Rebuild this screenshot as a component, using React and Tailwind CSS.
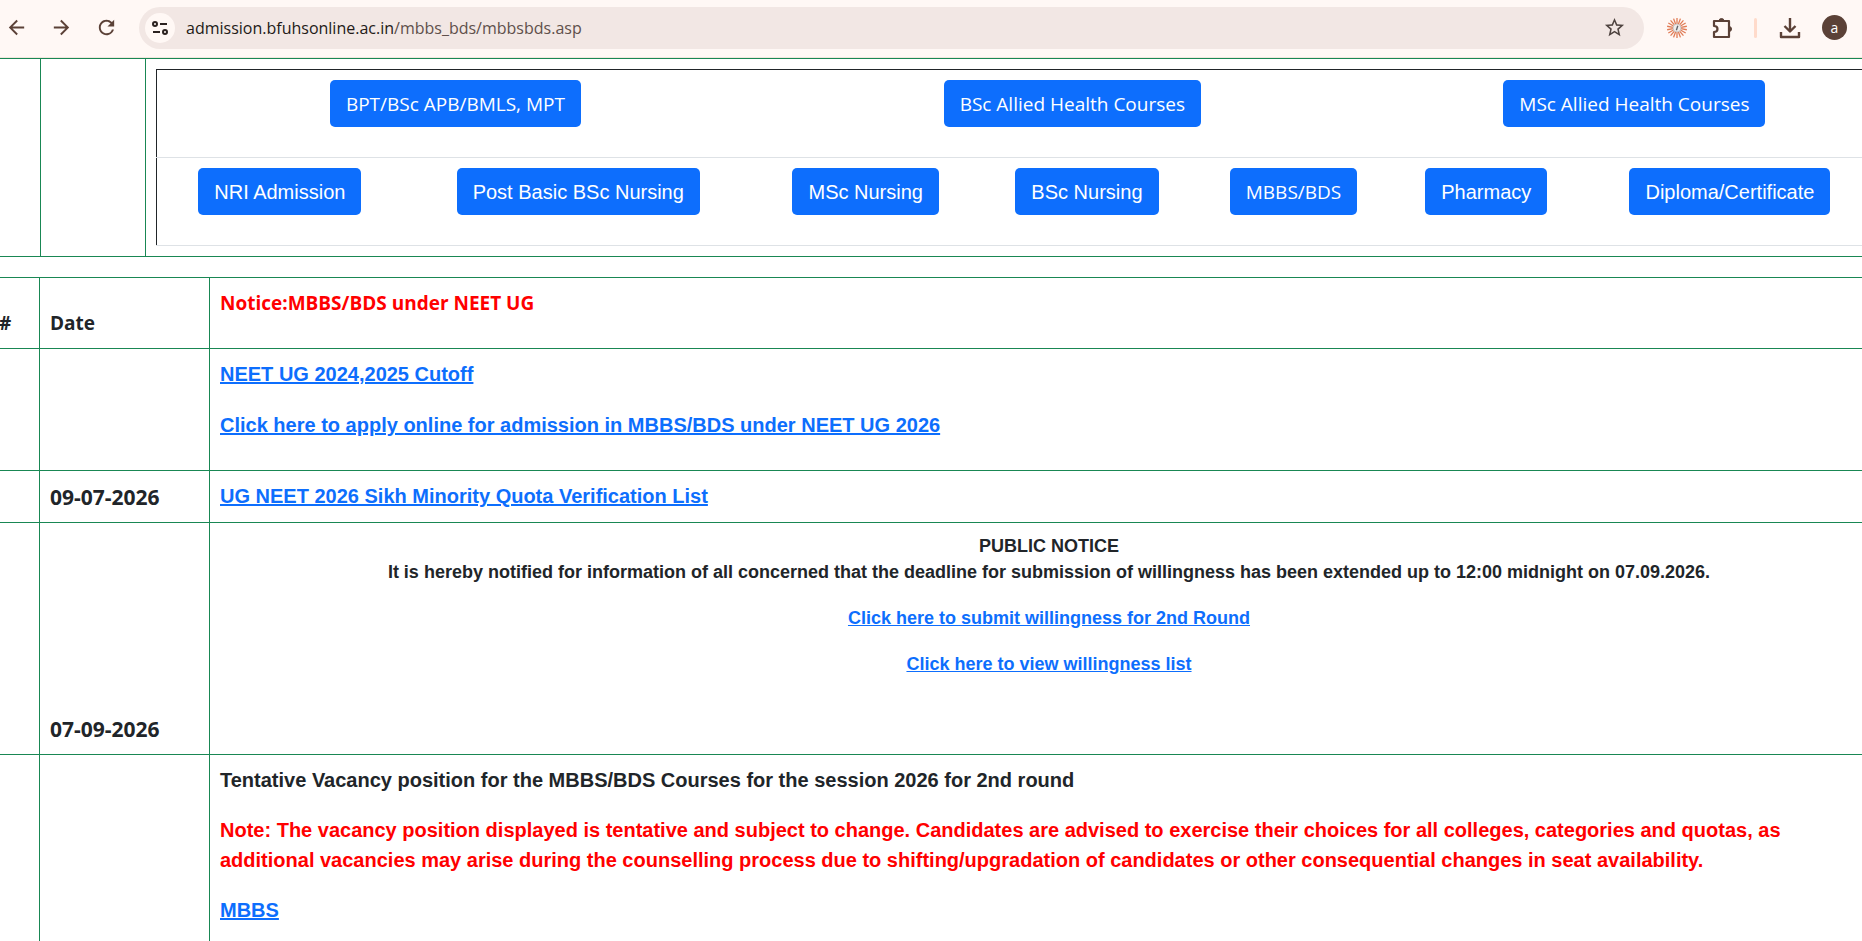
import { MdArrowBack, MdArrowForward, MdRefresh, MdStarBorder } from 'react-icons/md';

const topCourses = [
  { name: 'BPT/BSc APB/BMLS, MPT', span: 2 },
  { name: 'BSc Allied Health Courses', span: 3 },
  { name: 'MSc Allied Health Courses', span: 2 },
];

const courses = [
  { name: 'NRI Admission' },
  { name: 'Post Basic BSc Nursing' },
  { name: 'MSc Nursing' },
  { name: 'BSc Nursing' },
  { name: 'MBBS/BDS', sans: true },
  { name: 'Pharmacy' },
  { name: 'Diploma/Certificate' },
];

const rays = Array.from({ length: 18 }, (_, i) => i * 20);

const TuneIcon = () => (
  <svg width="18" height="18" viewBox="0 0 18 18" fill="none" stroke="#2b2220" strokeWidth="2">
    <circle cx="4" cy="5" r="2" />
    <path d="M9 5h7M2 13h7" />
    <circle cx="14" cy="13" r="2" />
  </svg>
);

const SparkIcon = () => (
  <svg width="22" height="22" viewBox="0 0 22 22" fill="none">
    {rays.map((angle) => (
      <path key={angle} d="M11 1v6" stroke="#e07b55" strokeWidth="1.3" transform={`rotate(${angle} 11 11)`} />
    ))}
    <circle cx="11" cy="11" r="4" fill="#f0ecea" stroke="#c9c2bf" strokeWidth="1" />
    <path d="M10.4 13.2l1.4-4.4" stroke="#5f6368" strokeWidth="1.3" />
  </svg>
);

const PuzzleIcon = () => (
  <svg width="22" height="22" viewBox="0 0 22 22" fill="none">
    <path
      d="M2 4h15v16H2v-5c2.500 0 3.500-1.200 3.500-3S4.500 9 2 9z"
      stroke="#5b4137"
      strokeWidth="2.2"
      strokeLinejoin="round"
    />
    <path d="M7 4a2.500 2.500 0 0 1 5 0zM17 9.500a2.500 2.500 0 0 1 0 5z" fill="#5b4137" stroke="#5b4137" />
  </svg>
);

const DownloadIcon = () => (
  <svg width="22" height="22" viewBox="0 0 22 22" fill="none" stroke="#5b4137" strokeWidth="2.4">
    <path d="M11 1v13M5.500 9l5.500 5.500L16.500 9M2 15v5h18v-5" strokeLinejoin="round" />
  </svg>
);

const Toolbar = () => (
  <header className="flex items-center h-[58px] pb-2 pt-[6px] pl-1 pr-[15px] bg-[#fff8f5] border-b border-[#f0e6dc] text-[#5b4137]">
    <button aria-label="Back" className="flex w-6 justify-center"><MdArrowBack size={23} /></button>
    <button aria-label="Forward" className="flex w-6 justify-center ml-[21px]"><MdArrowForward size={23} /></button>
    <button aria-label="Reload" className="flex w-6 justify-center ml-[21px]"><MdRefresh size={23} /></button>
    <div className="flex flex-1 items-center h-[42px] ml-[21px] pl-[6px] pr-[18px] rounded-full bg-[#f2e7e4]">
      <button aria-label="Site information" className="flex items-center justify-center size-[30px] rounded-full bg-[#fff8f5]">
        <TuneIcon />
      </button>
      <div className="flex-1 ml-[11px] pt-px text-[16px] text-[#5f504b]">
        <span className="text-[#231a17]">admission.bfuhsonline.ac.in</span>/mbbs_bds/mbbsbds.asp
      </div>
      <button aria-label="Bookmark" className="text-[#4f4440]"><MdStarBorder size={23} /></button>
    </div>
    <button aria-label="Assistant" className="ml-[22px]"><SparkIcon /></button>
    <button aria-label="Extensions" className="ml-6"><PuzzleIcon /></button>
    <div className="w-[3px] h-5 ml-5 rounded-full bg-[#ffdbcb]" />
    <button aria-label="Downloads" className="ml-[22px]"><DownloadIcon /></button>
    <button aria-label="Profile" className="flex items-center justify-center size-[25px] ml-[21px] rounded-full bg-[#5b4137] text-white text-[14px]">a</button>
  </header>
);

const CourseButton = ({ name, sans }) => (
  <button
    className={`h-[47px] mb-5 px-4 rounded-[5px] bg-[#0d6efd] text-white whitespace-nowrap align-top ${
      sans ? "pt-[2px] font-['Open_Sans',sans-serif] text-[19px]" : "font-['Liberation_Sans',Arial,sans-serif] text-[20px]"
    }`}
  >
    {name}
  </button>
);

const CourseTable = () => (
  <table className="w-full table-fixed border-collapse border-l border-t border-[#212529]">
    <colgroup>
      <col className="w-[14.3%]" />
      <col className="w-[20.4%]" />
      <col className="w-[13%]" />
      <col className="w-[12.7%]" />
      <col className="w-[11.3%]" />
      <col className="w-[11.1%]" />
      <col className="w-[17.2%]" />
    </colgroup>
    <tbody className="text-center">
      <tr className="border-b border-[#dee2e6]">
        {topCourses.map((course) => (
          <td key={course.name} colSpan={course.span} className="py-[10px]">
            <CourseButton name={course.name} sans />
          </td>
        ))}
      </tr>
      <tr className="border-b border-[#dee2e6]">
        {courses.map((course) => (
          <td key={course.name} className="py-[10px]">
            <CourseButton name={course.name} sans={course.sans} />
          </td>
        ))}
      </tr>
    </tbody>
  </table>
);

const NoticeLink = ({ children }) => (
  <a href="#" className="text-[#0d6efd] underline">{children}</a>
);

const Row = ({ date, children }) => (
  <tr>
    <td className="border border-[#198754]"></td>
    <td className="border border-[#198754] p-[10px] align-bottom text-[21px]">{date}</td>
    <td className="border border-[#198754] p-[10px] align-bottom font-['Liberation_Sans',Arial,sans-serif]">{children}</td>
  </tr>
);

const NoticeTable = () => (
  <table className="w-full table-fixed border-collapse mt-5 text-left font-bold text-[20px] leading-[30px]">
    <colgroup>
      <col className="w-[51px]" />
      <col className="w-[170px]" />
      <col />
    </colgroup>
    <thead className="text-[19px]">
      <tr>
        <th className="border border-[#198754] p-[10px] align-bottom">#</th>
        <th className="border border-[#198754] p-[10px] align-bottom">Date</th>
        <th className="border border-[#198754] p-[10px] align-bottom text-[#ff0000]">
          <p className="mb-5">Notice:MBBS/BDS under NEET UG</p>
        </th>
      </tr>
    </thead>
    <tbody>
      <Row>
        <p className="mb-5 leading-[31px]"><NoticeLink>NEET UG 2024,2025 Cutoff</NoticeLink></p>
        <p className="mb-5">
          <NoticeLink>Click here to apply online for admission in MBBS/BDS under NEET UG 2026</NoticeLink>
        </p>
      </Row>
      <Row date="09-07-2026">
        <p className="leading-[31px]"><NoticeLink>UG NEET 2026 Sikh Minority Quota Verification List</NoticeLink></p>
      </Row>
      <Row date="07-09-2026">
        <div className="text-center text-[18px] leading-[26px]">
          <p>PUBLIC NOTICE</p>
          <p className="mb-5">
            It is hereby notified for information of all concerned that the deadline for submission of willingness has been extended up to 12:00 midnight on 07.09.2026.
          </p>
          <p className="mb-5"><NoticeLink>Click here to submit willingness for 2nd Round</NoticeLink></p>
          <p className="mb-5"><NoticeLink>Click here to view willingness list</NoticeLink></p>
          <p className="mb-5 leading-[27px]">&nbsp;</p>
        </div>
      </Row>
      <Row>
        <p className="mb-5">Tentative Vacancy position for the MBBS/BDS Courses for the session 2026 for 2nd round</p>
        <p className="mb-5 text-[#ff0000]">
          Note: The vacancy position displayed is tentative and subject to change. Candidates are advised to exercise their choices for all colleges, categories and quotas, as additional vacancies may arise during the counselling process due to shifting/upgradation of candidates or other consequential changes in seat availability.
        </p>
        <p className="mb-5"><NoticeLink>MBBS</NoticeLink></p>
      </Row>
    </tbody>
  </table>
);

const App = () => {
  return (
    <div className="h-screen overflow-hidden bg-white text-[#212529] font-['Open_Sans',sans-serif]">
      <Toolbar />
      <main className="-ml-3 -mr-[27px]">
        <table className="w-full table-fixed border-collapse">
          <colgroup>
            <col className="w-[52px]" />
            <col className="w-[105px]" />
            <col />
          </colgroup>
          <tbody>
            <tr>
              <td className="border border-[#198754]"></td>
              <td className="border border-[#198754]"></td>
              <td className="border border-[#198754] p-[10px]">
                <CourseTable />
              </td>
            </tr>
          </tbody>
        </table>
        <NoticeTable />
      </main>
    </div>
  );
};

export default App;
